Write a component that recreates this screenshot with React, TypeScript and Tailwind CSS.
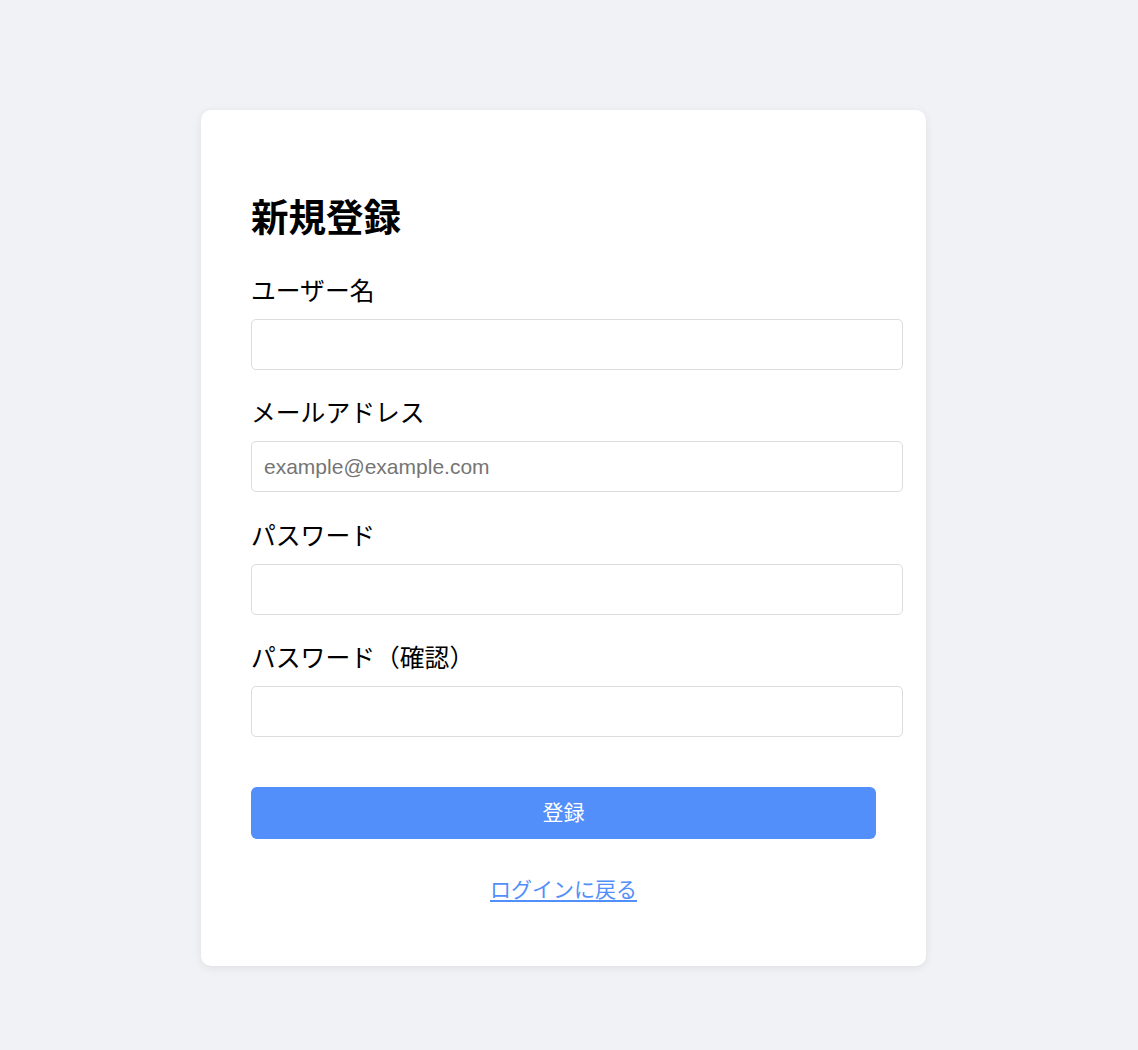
const FIELDS = [
  { label: "ユーザー名", type: "text", placeholder: "" },
  { label: "メールアドレス", type: "email", placeholder: "example@example.com" },
  { label: "パスワード", type: "password", placeholder: "" },
  { label: "パスワード（確認）", type: "password", placeholder: "" },
];

export default function App() {
  return (
    <div
      className="min-h-[1050px] w-full bg-[#f0f2f5] pt-[110px] pr-[11px] flex justify-center items-start"
      style={{ fontFamily: '"Liberation Sans", "Noto Sans CJK JP", sans-serif' }}
    >
      <div className="w-[725px] rounded-[10px] bg-white px-[50px] pt-[81px] pb-[59px] shadow-[0_2px_10px_rgba(0,0,0,0.08)]">
        <h2 className="text-[37.5px] font-bold leading-[54px] text-black">新規登録</h2>

        <form className="mt-[28px]" onSubmit={(e) => e.preventDefault()}>
          {FIELDS.map((f) => (
            <div key={f.label} className="mb-[25.4px]">
              <label className="block pt-[2px] text-[24.8px] leading-[34px] text-black">{f.label}</label>
              <input
                type={f.type}
                placeholder={f.placeholder}
                className="mt-[10px] box-content block w-[626px] rounded-[5px] border border-[#dcdcdc] bg-white px-3 py-3 text-[21px] leading-[25px] text-black placeholder:text-[#757575] outline-none"
              />
            </div>
          ))}

          <button
            type="submit"
            className="mt-[50px] block h-[52px] w-full rounded-[6px] bg-[#528ffa] text-[21px] text-white"
          >
            登録
          </button>
        </form>

        <div className="mt-[36px] text-center leading-[30px]">
          <a href="#" className="text-[21px] text-[#528ffa] underline underline-offset-[3px]">
            ログインに戻る
          </a>
        </div>
      </div>
    </div>
  );
}
